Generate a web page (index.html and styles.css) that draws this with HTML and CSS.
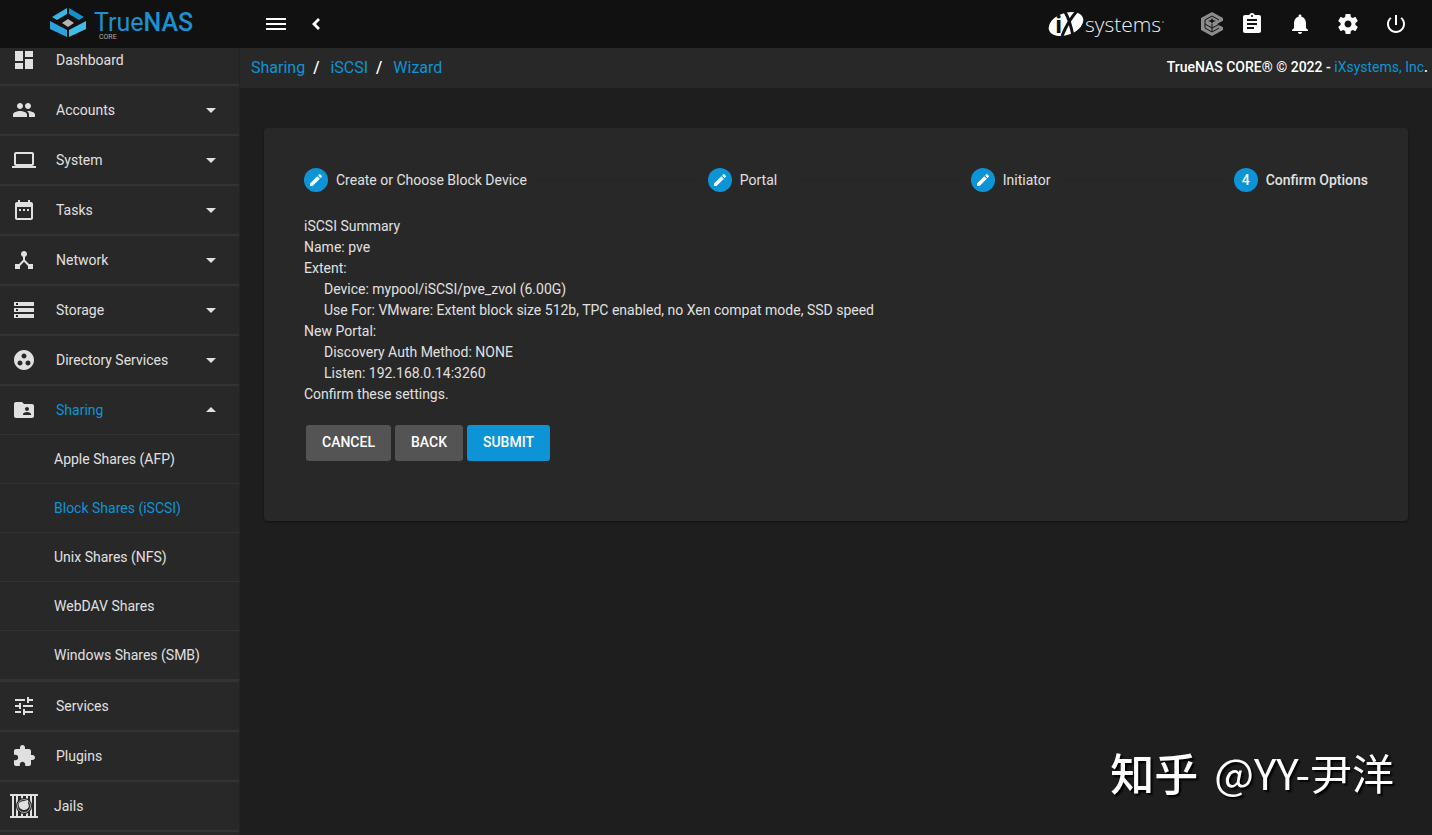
FILE: index.html
```
<!DOCTYPE html>
<html lang="en">
	<head>
		<meta charset="utf-8">
		<title>TrueNAS - iSCSI Wizard</title>
		<link rel="stylesheet" href="styles.css">
	</head>
	<body>
		<header class="topbar">
			<a href="#" class="logo" aria-label="TrueNAS CORE">
				<svg width="144" height="40" viewBox="0 0 144 40">
					<path fill="#3db5e2" d="M17 4v6L7 16l-5-3z"/>
					<path fill="#168fcb" d="M19 4v6l10 6 5-3z"/>
					<path fill="#2ba3da" d="M0 17l17 9v7L0 25z"/>
					<path fill="#42bbe8" d="M36 17l-17 9v7l17-8z"/>
					<path fill="#b5b5b5" d="M18 15l6 4-6 4-6-4z"/>
					<text class="logo-name" x="44" y="27">True<tspan class="logo-nas">NAS</tspan></text>
					<text class="logo-core" x="49" y="35">CORE</text>
				</svg>
			</a>
			<div class="topbar-main">
				<button class="icon-btn" aria-label="Toggle menu"><svg viewBox="0 0 24 24"><path d="M2 18h20v-2H2v2zm0-5h20v-2H2v2zm0-7v2h20V6H2z"/></svg></button>
				<button class="icon-btn chevron" aria-label="Collapse menu"><svg viewBox="0 0 24 24"><path d="M16 8l-2-2-6 6 6 6 2-2-4-4z"/></svg></button>
				<a href="#" class="ix-logo" aria-label="iXsystems">
					<svg width="118" height="32" viewBox="0 0 118 32">
						<ellipse cx="18" cy="16" rx="18" ry="11" transform="rotate(-20 18 16)" fill="#fff"/>
						<text class="ix-i" x="7" y="25">i</text>
						<path d="M17 4q5 8 8 24M29 3Q20 13 14 28" fill="none" stroke="#111" stroke-width="3"/>
						<text class="ix-name" x="37" y="24">systems</text>
						<path d="M114 14h2" stroke="#999"/>
					</svg>
				</a>
				<button class="icon-btn status" aria-label="TrueCommand">
					<svg viewBox="0 0 24 24">
						<path d="M12 0l11 6v3l-4 2v2l4 2v3l-11 6L1 18V6z"/>
						<path d="M19 8l-7-4-7 4v8l7 4 7-4M5 12l7 4 8-4M12 12v8" fill="none" stroke="#111"/>
						<path d="M12 6l1 2 3 1-3 1-1 2-1-2-3-1 3-1z" fill="#111"/>
						<path d="M17 12l6-3v6z" fill="#111"/>
					</svg>
				</button>
				<button class="icon-btn" aria-label="Task manager"><svg viewBox="0 0 24 24"><path d="M19 3h-4.180C14.400 1.840 13.300 1 12 1c-1.300 0-2.400.840-2.820 2H5c-1.100 0-2 .9-2 2v14c0 1.100.9 2 2 2h14c1.100 0 2-.9 2-2V5c0-1.100-.9-2-2-2zm-7 0c.550 0 1 .450 1 1s-.450 1-1 1-1-.450-1-1 .450-1 1-1zm2 14H7v-2h7v2zm3-4H7v-2h10v2zm0-4H7V7h10v2z"/></svg></button>
				<button class="icon-btn" aria-label="Notifications"><svg viewBox="0 0 24 24"><path d="M12 22c1.100 0 2-.9 2-2h-4c0 1.100.890 2 2 2zm6-6v-5c0-3.070-1.640-5.640-4.500-6.320V4c0-.830-.670-1.500-1.500-1.500s-1.500.670-1.500 1.500v.680C7.630 5.360 6 7.920 6 11v5l-2 2v1h16v-1l-2-2z"/></svg></button>
				<button class="icon-btn" aria-label="Settings"><svg viewBox="0 0 24 24"><path d="M19.430 12.980c.040-.320.070-.640.070-.980s-.030-.660-.070-.980l2.110-1.650c.190-.150.240-.420.120-.640l-2-3.460c-.120-.220-.390-.3-.610-.220l-2.490 1c-.520-.4-1.080-.730-1.690-.980l-.380-2.650C14.460 2.180 14.250 2 14 2h-4c-.250 0-.460.180-.490.420l-.380 2.650c-.610.250-1.170.590-1.690.980l-2.490-1c-.230-.090-.490 0-.610.220l-2 3.460c-.130.220-.070.490.120.640l2.110 1.650c-.040.320-.070.650-.070.980s.030.660.070.980l-2.110 1.650c-.190.150-.240.420-.120.640l2 3.460c.120.220.390.3.610.220l2.490-1c.520.4 1.080.730 1.690.980l.380 2.650c.030.240.240.420.490.420h4c.250 0 .460-.180.490-.420l.380-2.650c.610-.250 1.170-.590 1.690-.980l2.490 1c.230.090.490 0 .610-.220l2-3.460c.120-.220.070-.490-.120-.640l-2.110-1.650zM12 15.500c-1.930 0-3.500-1.570-3.500-3.500s1.570-3.500 3.500-3.500 3.500 1.570 3.500 3.500-1.570 3.500-3.500 3.500z"/></svg></button>
				<button class="icon-btn" aria-label="Power"><svg viewBox="0 0 24 24"><path d="M13 3h-2v10h2V3zm4.830 2.170l-1.420 1.420C17.990 7.860 19 9.810 19 12c0 3.870-3.130 7-7 7s-7-3.130-7-7c0-2.190 1.010-4.140 2.580-5.420L6.170 5.170C4.230 6.820 3 9.260 3 12c0 4.970 4.030 9 9 9s9-4.030 9-9c0-2.740-1.230-5.180-3.170-6.830z"/></svg></button>
			</div>
		</header>

		<div class="layout">
			<nav class="sidebar">
				<ul class="menu">
					<li><a href="#" class="item top"><svg class="icon" viewBox="0 0 24 24"><path d="M3 13h8V3H3v10zm0 8h8v-6H3v6zm10 0h8V11h-8v10zm0-18v6h8V3h-8z"/></svg><span>Dashboard</span></a></li>
					<li><a href="#" class="item"><svg class="icon" viewBox="0 0 24 24"><path d="M16 11c1.660 0 2.990-1.340 2.990-3S17.660 5 16 5c-1.660 0-3 1.340-3 3s1.340 3 3 3zm-8 0c1.660 0 2.990-1.340 2.990-3S9.660 5 8 5C6.340 5 5 6.340 5 8s1.340 3 3 3zm0 2c-2.330 0-7 1.170-7 3.500V19h14v-2.500c0-2.330-4.670-3.500-7-3.500zm8 0c-.290 0-.620.020-.970.050 1.160.840 1.970 1.970 1.970 3.450V19h6v-2.500c0-2.330-4.670-3.500-7-3.500z"/></svg><span>Accounts</span><svg class="arrow" viewBox="0 0 24 24"><path d="M7 10l5 5 5-5z"/></svg></a></li>
					<li><a href="#" class="item"><svg class="icon" viewBox="0 0 24 24"><path d="M20 18c1.100 0 1.990-.9 1.990-2L22 6c0-1.100-.9-2-2-2H4c-1.100 0-2 .9-2 2v10c0 1.100.9 2 2 2H0v2h24v-2h-4zM4 6h16v10H4V6z"/></svg><span>System</span><svg class="arrow" viewBox="0 0 24 24"><path d="M7 10l5 5 5-5z"/></svg></a></li>
					<li><a href="#" class="item"><svg class="icon" viewBox="0 0 24 24"><path d="M9 11H7v2h2v-2zm4 0h-2v2h2v-2zm4 0h-2v2h2v-2zm2-7h-1V2h-2v2H8V2H6v2H5c-1.110 0-1.990.9-1.990 2L3 20c0 1.100.890 2 2 2h14c1.100 0 2-.9 2-2V6c0-1.100-.9-2-2-2zm0 16H5V9h14v11z"/></svg><span>Tasks</span><svg class="arrow" viewBox="0 0 24 24"><path d="M7 10l5 5 5-5z"/></svg></a></li>
					<li><a href="#" class="item"><svg class="icon" viewBox="0 0 24 24"><path d="M17 16l-4-4V8.820C14.160 8.400 15 7.300 15 6c0-1.660-1.340-3-3-3S9 4.340 9 6c0 1.300.840 2.400 2 2.820V12l-4 4H3v5h5v-3.050l4-4.200 4 4.200V21h5v-5h-4z"/></svg><span>Network</span><svg class="arrow" viewBox="0 0 24 24"><path d="M7 10l5 5 5-5z"/></svg></a></li>
					<li><a href="#" class="item"><svg class="icon" viewBox="0 0 24 24"><path d="M2 20h20v-4H2v4zm2-3h2v2H4v-2zM2 4v4h20V4H2zm4 3H4V5h2v2zm-4 7h20v-4H2v4zm2-3h2v2H4v-2z"/></svg><span>Storage</span><svg class="arrow" viewBox="0 0 24 24"><path d="M7 10l5 5 5-5z"/></svg></a></li>
					<li><a href="#" class="item"><svg class="icon" viewBox="0 0 24 24"><path d="M12 2C6.480 2 2 6.480 2 12s4.480 10 10 10 10-4.480 10-10S17.520 2 12 2zM8 17.500c-1.380 0-2.500-1.120-2.500-2.500s1.120-2.500 2.500-2.500 2.500 1.120 2.500 2.500-1.120 2.500-2.500 2.500zM9.500 8c0-1.380 1.120-2.500 2.500-2.500s2.500 1.120 2.500 2.500-1.120 2.500-2.500 2.500S9.500 9.380 9.500 8zm6.500 9.500c-1.380 0-2.500-1.120-2.500-2.500s1.120-2.500 2.500-2.500 2.500 1.120 2.500 2.500-1.120 2.500-2.500 2.500z"/></svg><span>Directory Services</span><svg class="arrow" viewBox="0 0 24 24"><path d="M7 10l5 5 5-5z"/></svg></a></li>
					<li>
						<a href="#" class="item open"><svg class="icon" viewBox="0 0 24 24"><path d="M20 6h-8l-2-2H4c-1.100 0-1.990.9-1.990 2L2 18c0 1.100.9 2 2 2h16c1.100 0 2-.9 2-2V8c0-1.100-.9-2-2-2zm-5 3c1.100 0 2 .9 2 2s-.9 2-2 2-2-.9-2-2 .9-2 2-2zm4 8h-8v-1c0-1.330 2.670-2 4-2s4 .670 4 2v1z"/></svg><span>Sharing</span><svg class="arrow" viewBox="0 0 24 24"><path d="M7 14l5-5 5 5z"/></svg></a>
						<ul class="submenu">
							<li><a href="#">Apple Shares (AFP)</a></li>
							<li><a href="#" class="active">Block Shares (iSCSI)</a></li>
							<li><a href="#">Unix Shares (NFS)</a></li>
							<li><a href="#">WebDAV Shares</a></li>
							<li><a href="#">Windows Shares (SMB)</a></li>
						</ul>
					</li>
					<li><a href="#" class="item"><svg class="icon" viewBox="0 0 24 24"><path d="M3 17v2h6v-2H3zM3 5v2h10V5H3zm10 16v-2h8v-2h-8v-2h-2v6h2zM7 9v2H3v2h4v2h2V9H7zm14 4v-2H11v2h10zm-6-4h2V7h4V5h-4V3h-2v6z"/></svg><span>Services</span></a></li>
					<li><a href="#" class="item"><svg class="icon" viewBox="0 0 24 24"><path d="M20.500 11H19V7c0-1.100-.9-2-2-2h-4V3.500C13 2.120 11.880 1 10.500 1S8 2.120 8 3.500V5H4c-1.100 0-1.990.9-1.990 2v3.800H3.500c1.490 0 2.700 1.210 2.700 2.700s-1.210 2.700-2.700 2.700H2V20c0 1.100.9 2 2 2h3.800v-1.500c0-1.490 1.210-2.700 2.700-2.700 1.490 0 2.700 1.210 2.700 2.700V22H17c1.100 0 2-.9 2-2v-4h1.500c1.380 0 2.500-1.120 2.500-2.500S21.880 11 20.500 11z"/></svg><span>Plugins</span></a></li>
					<li><a href="#" class="item jails">
						<svg class="icon-jails" viewBox="0 0 28 24">
							<path d="M0 0h28v2H0zM0 22h28v2H0zM2 2h2v20H2zM6 2h2v20H6zM11 2h2v3h-2zM16 2h2v3h-2zM11 19h2v3h-2zM16 19h2v3h-2zM20 2h2v20h-2zM24 2h2v20h-2z"/>
							<circle cx="14" cy="12" r="8" fill="#282828"/>
							<circle cx="14" cy="12" r="6.500" fill="none" stroke="#a8a8a8"/>
							<path d="M9 9q2-2 5-2l4-1v3q2 4-1 6-3 2-6 0-3-2-2-6z"/>
						</svg><span>Jails</span></a></li>
				</ul>
			</nav>

			<main class="content">
				<div class="crumb-bar">
					<div class="crumbs">
						<a href="#">Sharing</a><span class="sep">/</span><a href="#">iSCSI</a><span class="sep">/</span><a href="#">Wizard</a>
					</div>
					<div class="copyright">TrueNAS CORE® © 2022 - <a href="#">iXsystems, Inc</a>.</div>
				</div>

				<section class="card">
					<div class="stepper">
						<div class="step"><span class="dot"><svg viewBox="0 0 24 24"><path d="M3 17.250V21h3.750L17.810 9.940l-3.750-3.750L3 17.250zM20.710 7.040c.390-.390.390-1.020 0-1.410l-2.340-2.340c-.390-.390-1.020-.390-1.410 0l-1.830 1.830 3.750 3.750 1.830-1.830z"/></svg></span><span class="label">Create or Choose Block Device</span></div>
						<div class="line"></div>
						<div class="step"><span class="dot"><svg viewBox="0 0 24 24"><path d="M3 17.250V21h3.750L17.810 9.940l-3.750-3.750L3 17.250zM20.710 7.040c.390-.390.390-1.020 0-1.410l-2.340-2.340c-.390-.390-1.020-.390-1.410 0l-1.830 1.830 3.750 3.750 1.830-1.830z"/></svg></span><span class="label">Portal</span></div>
						<div class="line"></div>
						<div class="step"><span class="dot"><svg viewBox="0 0 24 24"><path d="M3 17.250V21h3.750L17.810 9.940l-3.750-3.750L3 17.250zM20.710 7.040c.390-.390.390-1.020 0-1.410l-2.340-2.340c-.390-.390-1.020-.390-1.410 0l-1.830 1.830 3.750 3.750 1.830-1.830z"/></svg></span><span class="label">Initiator</span></div>
						<div class="line"></div>
						<div class="step current"><span class="dot">4</span><span class="label">Confirm Options</span></div>
					</div>
					<div class="summary">
						<p>iSCSI Summary</p>
						<p>Name: pve</p>
						<p>Extent:</p>
						<p class="indent">Device: mypool/iSCSI/pve_zvol (6.00G)</p>
						<p class="indent">Use For: VMware: Extent block size 512b, TPC enabled, no Xen compat mode, SSD speed</p>
						<p>New Portal:</p>
						<p class="indent">Discovery Auth Method: NONE</p>
						<p class="indent">Listen: 192.168.0.14:3260</p>
						<p>Confirm these settings.</p>
					</div>
					<div class="actions">
						<button class="btn">CANCEL</button>
						<button class="btn">BACK</button>
						<button class="btn primary">SUBMIT</button>
					</div>
				</section>
			</main>
		</div>

		<div class="watermark"><span class="zhihu">知乎</span><span>@YY-尹洋</span></div>
	</body>
</html>
```
FILE: styles.css
```
* {
	margin: 0;
	padding: 0;
	box-sizing: border-box;
}
body {
	display: flex;
	flex-direction: column;
	height: 100vh;
	overflow: hidden;
	background: #1e1e1e;
	color: #e0e0e0;
	font-family: Roboto, "Liberation Sans", sans-serif;
	font-size: 14px;
}
a {
	color: #0d94d6;
	text-decoration: none;
}
ul {
	list-style: none;
}
button {
	border: 0;
	font-family: inherit;
	font-size: 14px;
	cursor: pointer;
}
svg {
	display: block;
	fill: currentColor;
}

/* top bar */
.topbar {
	display: flex;
	flex: none;
	height: 48px;
	background: #111;
	color: #fff;
}
.logo {
	width: 240px;
	padding: 4px 0 0 50px;
}
.logo text {
	fill: #1b91cf;
	font-size: 25px;
}
.logo .logo-nas {
	font-weight: 500;
}
.logo .logo-core {
	fill: #aaa;
	font-size: 7px;
}
.topbar-main {
	display: flex;
	flex: 1;
	align-items: center;
	padding: 0 12px;
}
.icon-btn {
	width: 48px;
	padding: 0 12px;
	background: none;
	color: #fff;
}
.icon-btn svg {
	width: 24px;
	height: 24px;
}
.icon-btn.chevron {
	width: 32px;
	padding: 0 4px;
}
.icon-btn.status {
	width: 32px;
	padding: 0 4px;
	color: #8c8c8c;
}
.ix-logo {
	margin-left: auto;
	margin-right: 30px;
}
.ix-i {
	fill: #111;
	font-family: "Open Sans", sans-serif;
	font-size: 24px;
	font-weight: 700;
}
.ix-name {
	fill: #f0f0f0;
	font-family: "Open Sans", sans-serif;
	font-size: 21px;
	font-weight: 300;
}

/* sidebar */
.layout {
	display: flex;
	flex: 1;
	min-height: 0;
}
.sidebar {
	flex: none;
	width: 240px;
	overflow: hidden;
	background: #282828;
	border-right: 1px solid #242424;
}
.item {
	display: flex;
	align-items: center;
	height: 50px;
	padding: 0 16px 0 12px;
	border-bottom: 2px solid #333;
	color: #e0e0e0;
}
.item.top {
	height: 38px;
	padding-bottom: 12px;
}
.item .icon {
	width: 24px;
	height: 24px;
	margin-right: 20px;
}
.item .arrow {
	width: 24px;
	height: 24px;
	margin-left: auto;
}
.item.open {
	height: 49px;
	border-bottom-width: 1px;
}
.item.open span {
	color: #0d94d6;
}
.item.jails {
	padding-left: 10px;
}
.icon-jails {
	width: 28px;
	height: 24px;
	margin-right: 16px;
}
.submenu {
	border-bottom: 2px solid #333;
}
.submenu a {
	display: flex;
	align-items: center;
	height: 49px;
	padding-left: 54px;
	border-bottom: 1px solid #333;
	color: #e0e0e0;
}
.submenu a.active {
	color: #0d94d6;
}

/* content */
.content {
	flex: 1;
	min-width: 0;
}
.crumb-bar {
	display: flex;
	align-items: center;
	justify-content: space-between;
	height: 40px;
	padding: 0 4px 2px 11px;
	background: #282828;
}
.crumbs {
	font-size: 16px;
}
.crumbs .sep {
	margin: 0 11px 0 8px;
	color: #fff;
	font-weight: 500;
}
.copyright {
	color: #fff;
	font-weight: 500;
}
.copyright a {
	font-weight: 400;
}
.card {
	margin: 40px 24px;
	padding: 16px 16px 60px;
	border-radius: 4px;
	background: #282828;
	box-shadow: 0 1px 2px #111;
}
.stepper {
	display: flex;
	align-items: center;
}
.step {
	display: flex;
	align-items: center;
	height: 72px;
	padding: 0 24px;
}
.dot {
	display: flex;
	align-items: center;
	justify-content: center;
	width: 24px;
	height: 24px;
	margin-right: 8px;
	border-radius: 50%;
	background: #0d94d6;
	color: #fff;
}
.dot svg {
	width: 16px;
	height: 16px;
}
.label {
	min-width: 50px;
}
.current {
	font-weight: 500;
}
.line {
	flex: auto;
	min-width: 32px;
	margin: 0 -16px;
	border-top: 1px solid #242424;
}
.summary {
	padding: 0 24px;
	line-height: 21px;
}
.summary .indent {
	padding-left: 20px;
}
.actions {
	display: flex;
	gap: 4px;
	padding: 20px 26px 0;
}
.btn {
	height: 36px;
	padding: 0 16px 2px;
	border-radius: 3px;
	background: #545454;
	color: #fff;
	font-weight: 500;
}
.btn.primary {
	background: #0d94d6;
}

/* watermark over the page */
.watermark {
	position: fixed;
	right: 38px;
	bottom: 35px;
	display: flex;
	align-items: center;
	gap: 16px;
	color: #fff;
	font-family: "Noto Sans CJK SC", sans-serif;
	font-size: 42px;
	line-height: 56px;
	text-shadow: 2px 2px 2px #000;
}
.zhihu {
	font-size: 44px;
	font-weight: 500;
}
```
